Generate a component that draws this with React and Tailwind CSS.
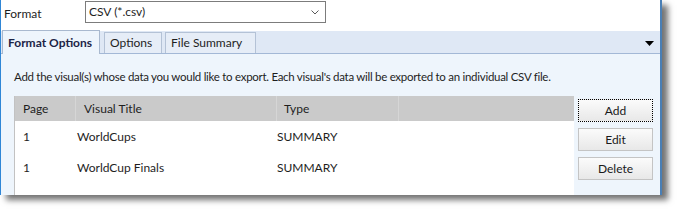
import React from "react";

const rows = [
  { page: "1", title: "WorldCups", type: "SUMMARY" },
  { page: "1", title: "WorldCup Finals", type: "SUMMARY" },
];

function Tab({ label, active, className }) {
  if (active) {
    return (
      <div
        className={`h-[24px] -mb-px bg-[#eef5fc] border border-b-0 border-[#a9b9cf] flex items-center px-[5px] font-bold text-[#1c2446] whitespace-nowrap ${className}`}
      >
        {label}
      </div>
    );
  }
  return (
    <div
      className={`h-[21px] bg-[#e6edf7] border border-b-0 border-[#b4c2d6] flex items-center px-[5px] text-[#1e1e1e] whitespace-nowrap ${className}`}
    >
      {label}
    </div>
  );
}

function Button({ label, focused }) {
  return (
    <button
      className={`h-[23px] w-[75px] flex items-center justify-center bg-gradient-to-b from-[#fbfbfb] to-[#e8e8e8] text-[#1a1a1a] ${
        focused ? "border border-dotted border-black" : "border border-[#c4c4c4]"
      }`}
    >
      {label}
    </button>
  );
}

export default function App() {
  return (
    <div className="w-[677px] h-[210px] bg-white overflow-hidden font-['Lato','Noto_Sans',sans-serif] text-[11.5px] leading-none text-[#1e1e1e]">
      <div className="w-[662px] h-[195px] bg-white border-l border-r-2 border-l-[#2f86d6] border-r-[#4a7fb5] flex flex-col shadow-[6px_5px_6px_rgba(0,0,0,0.55)]">
        {/* format row */}
        <div className="h-[31px] flex items-start pt-[1px] shrink-0 text-[12px]">
          <span className="ml-[3px] mt-[7px] w-[81px]">Format</span>
          <div className="w-[241px] h-[22px] border border-[#7c7c7c] flex items-center justify-between pl-[3px] pr-[6px] bg-white">
            <span>CSV (*.csv)</span>
            <svg width="8" height="5" viewBox="0 0 8 5">
              <path d="M0.5 0.5 L4 4 L7.5 0.5" fill="none" stroke="#5a5a5a" strokeWidth="1" />
            </svg>
          </div>
        </div>

        {/* tab strip */}
        <div className="h-[23px] shrink-0 bg-[#dfe8f5] border-b border-[#a3b8d6] flex items-end relative pl-px text-[12px]">
          <Tab label="Format Options" active className="w-[98px]" />
          <Tab label="Options" className="w-[58px] ml-[4px]" />
          <Tab label="File Summary" className="w-[91px] ml-[3px]" />
          <svg className="absolute right-[6px] top-[10px]" width="9" height="5" viewBox="0 0 9 5">
            <path d="M0 0 H9 L4.5 5 Z" fill="#000" />
          </svg>
        </div>

        {/* content */}
        <div className="flex-1 bg-[#eef5fc] flex flex-col pl-[13px] pr-[7px]">
          <p className="mt-[17px] h-[25px] whitespace-nowrap tracking-[-0.28px]">
            Add the visual(s) whose data you would like to export. Each visual's data will be exported to an individual CSV file.
          </p>
          <div className="flex-1 flex gap-[4px] text-[12px]">
            <div className="w-[560px] bg-white border-l border-[#c2c2c2] flex flex-col">
              <div className="h-[25px] bg-[#cacaca] flex items-center">
                <div className="w-[60px] pl-[8px]">Page</div>
                <div className="w-[201px] pl-[8px] h-full flex items-center border-l border-[#d6d6d6]">Visual Title</div>
                <div className="w-[122px] pl-[7px] h-full flex items-center border-l border-[#d6d6d6]">Type</div>
                <div className="flex-1 h-full border-l border-[#d6d6d6]" />
              </div>
              {rows.map((r, i) => (
                <div key={i} className="h-[31px] flex items-center">
                  <div className="w-[62px] pl-[8px]">{r.page}</div>
                  <div className="w-[200px]">{r.title}</div>
                  <div>{r.type}</div>
                </div>
              ))}
            </div>
            <div className="flex flex-col gap-[6px] pt-[3px]">
              <Button label="Add" focused />
              <Button label="Edit" />
              <Button label="Delete" />
            </div>
          </div>
        </div>
      </div>
    </div>
  );
}
